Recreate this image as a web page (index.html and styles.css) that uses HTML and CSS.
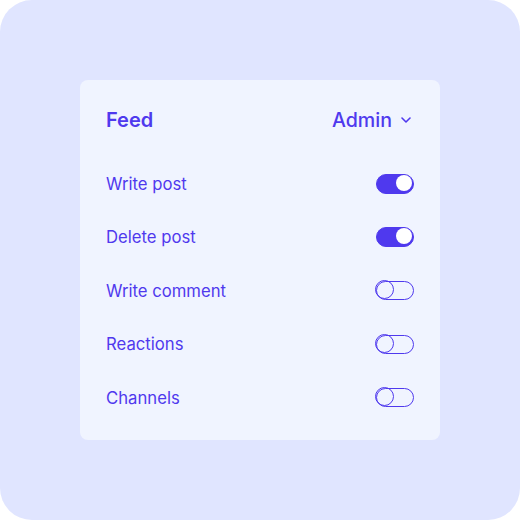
FILE: index.html
```html
<!DOCTYPE html>
<html lang="en">
<head>
    <meta charset="UTF-8">
    <title>Feed permissions</title>
    <link rel="stylesheet" href="styles.css">
</head>
<body>
    <div class="frame">
        <div class="card">
            <!-- Header -->
            <div class="card-header">
                <span class="title">Feed</span>
                <span class="role">Admin
                    <svg class="chevron" width="10" height="6" viewBox="0 0 10 6"><path d="M1 1l4 4 4-4" fill="none" stroke="currentColor" stroke-width="1.6" stroke-linecap="round" stroke-linejoin="round"/></svg>
                </span>
            </div>

            <!-- Permissions -->
            <ul class="perm-list">
                <li class="perm-row"><span>Write post</span><span class="toggle on"></span></li>
                <li class="perm-row"><span>Delete post</span><span class="toggle on"></span></li>
                <li class="perm-row"><span>Write comment</span><span class="toggle"></span></li>
                <li class="perm-row"><span>Reactions</span><span class="toggle"></span></li>
                <li class="perm-row"><span>Channels</span><span class="toggle"></span></li>
            </ul>
        </div>
    </div>
</body>
</html>
```

FILE: styles.css
```css
/* General */
body {
    margin: 0;
    background-color: #ffffff;
    font-family: 'Inter', 'Noto Sans', sans-serif;
    color: #4f39ee;
}

.frame {
    width: 520px;
    height: 520px;
    box-sizing: border-box;
    padding: 80px;
    background-color: #e0e5ff;
    border-radius: 32px;
}

/* Card */
.card {
    height: 360px;
    box-sizing: border-box;
    padding: 24px 26px;
    background-color: #f0f4ff;
    border-radius: 8px;
}

.card-header {
    height: 32px;
    display: flex;
    align-items: center;
    justify-content: space-between;
    font-size: 20px;
}

.card-header .title {
    font-weight: 600;
}

.card-header .role {
    display: flex;
    align-items: center;
    gap: 9px;
    font-size: 19.6px;
    font-weight: 500;
}

.chevron {
    margin-right: 3px;
}

/* Rows */
.perm-list {
    list-style: none;
    margin: 21px 0 0;
    padding: 0;
}

.perm-row {
    height: 53.5px;
    display: flex;
    align-items: center;
    justify-content: space-between;
    font-size: 16.7px;
}

/* Toggle */
.toggle {
    position: relative;
    width: 38px;
    height: 19px;
    box-sizing: border-box;
    border: 1.8px solid #4f39ee;
    border-radius: 10px;
}

.toggle::after {
    content: "";
    position: absolute;
    left: -1.8px;
    top: -1.8px;
    width: 19px;
    height: 19px;
    box-sizing: border-box;
    border: 1.8px solid #4f39ee;
    border-radius: 50%;
}

.toggle.on {
    height: 20px;
    background-color: #4f39ee;
}

.toggle.on::after {
    left: auto;
    right: 0.6px;
    top: 0.2px;
    width: 16px;
    height: 16px;
    border: none;
    background-color: #ffffff;
}
```
